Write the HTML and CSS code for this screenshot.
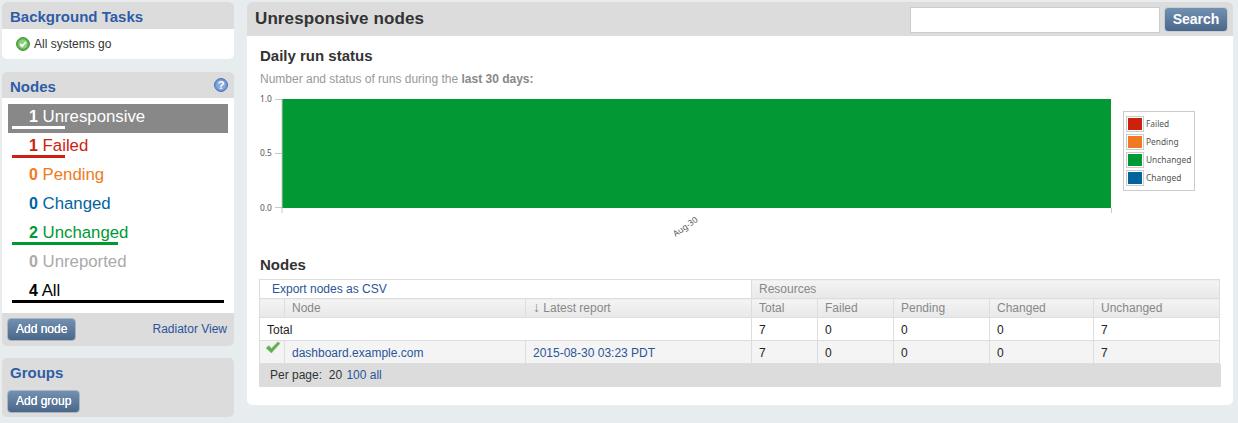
FILE: index.html
```html
<!DOCTYPE html>
<html lang="en">
<head>
    <meta charset="UTF-8">
    <title>Unresponsive nodes</title>
    <link rel="stylesheet" href="styles.css">
</head>

<body>

    <div class="page">

        <!-- Sidebar -->
        <aside class="sidebar">

            <section class="box tasks">
                <h3>Background Tasks</h3>
                <div class="tasks-body">
                    <svg class="ok-icon" width="14" height="14" viewBox="0 0 14 14">
                        <circle cx="7" cy="7" r="6.4" fill="#5cb24a" stroke="#3d8f34"/>
                        <circle cx="7" cy="7" r="4.6" fill="#8fd07e"/>
                        <path d="M4.2 7.2 L6.2 9.2 L9.9 5" fill="none" stroke="#fff" stroke-width="1.8"/>
                    </svg>
                    <span>All systems go</span>
                </div>
            </section>

            <section class="box nodes">
                <div class="nodes-head">
                    <h3>Nodes</h3>
                    <svg class="help-icon" width="14" height="14" viewBox="0 0 14 14">
                        <circle cx="7" cy="7" r="6.5" fill="#6d94cf" stroke="#4a74b4"/>
                        <circle cx="7" cy="7" r="4.8" fill="#88a9dc"/>
                        <text x="7" y="10.5" text-anchor="middle" class="help-mark">?</text>
                    </svg>
                </div>
                <ul class="status-list">
                    <li class="status selected"><div class="status-text"><b>1</b> Unresponsive</div><div class="status-bar" style="width: 25%"></div></li>
                    <li class="status failed"><div class="status-text"><b>1</b> Failed</div><div class="status-bar" style="width: 25%"></div></li>
                    <li class="status pending"><div class="status-text"><b>0</b> Pending</div><div class="status-bar" style="width: 0%"></div></li>
                    <li class="status changed"><div class="status-text"><b>0</b> Changed</div><div class="status-bar" style="width: 0%"></div></li>
                    <li class="status unchanged"><div class="status-text"><b>2</b> Unchanged</div><div class="status-bar" style="width: 50%"></div></li>
                    <li class="status unreported"><div class="status-text"><b>0</b> Unreported</div><div class="status-bar" style="width: 0%"></div></li>
                    <li class="status all"><div class="status-text"><b>4</b> All</div><div class="status-bar" style="width: 100%"></div></li>
                </ul>
                <div class="nodes-foot">
                    <a class="btn" href="#">Add node</a>
                    <a class="link" href="#">Radiator View</a>
                </div>
            </section>

            <section class="box groups">
                <h3>Groups</h3>
                <a class="btn" href="#">Add group</a>
            </section>

        </aside>

        <!-- Main panel -->
        <main class="main">

            <header class="main-head">
                <h1>Unresponsive nodes</h1>
                <form class="search">
                    <input type="text">
                    <button type="button" class="btn btn-big">Search</button>
                </form>
            </header>

            <div class="main-body">

                <h2>Daily run status</h2>
                <p class="note">Number and status of runs during the <strong>last 30 days:</strong></p>

                <!-- Chart -->
                <svg class="chart" width="961" height="146" viewBox="0 -5 961 146">
                    <rect x="23" y="0" width="829" height="109" fill="#019934"/>
                    <path d="M23 0V114 M852.5 109V114 M16 .5H23 M16 54.5H23 M16 108.5H23" stroke="#c8c8c8" fill="none"/>
                    <text x="1" y="3" class="axis">1.0</text>
                    <text x="1" y="57" class="axis">0.5</text>
                    <text x="1" y="112" class="axis">0.0</text>
                    <text x="428" y="130" class="axis" transform="rotate(-35 428 130)" text-anchor="middle">Aug-30</text>

                    <rect x="864.5" y="12.5" width="71" height="79" fill="#fff" stroke="#ccc"/>

                    <rect x="868.5" y="18.5" width="15" height="13" fill="#cd2110" stroke="#fff"/>
                    <rect x="867.5" y="17.5" width="17" height="15" fill="none" stroke="#ccc"/>
                    <text x="887" y="28" class="axis">Failed</text>

                    <rect x="868.5" y="36.5" width="15" height="13" fill="#f07a21" stroke="#fff"/>
                    <rect x="867.5" y="35.5" width="17" height="15" fill="none" stroke="#ccc"/>
                    <text x="887" y="46" class="axis">Pending</text>

                    <rect x="868.5" y="54.5" width="15" height="13" fill="#019934" stroke="#fff"/>
                    <rect x="867.5" y="53.5" width="17" height="15" fill="none" stroke="#ccc"/>
                    <text x="887" y="64" class="axis">Unchanged</text>

                    <rect x="868.5" y="72.5" width="15" height="13" fill="#00649e" stroke="#fff"/>
                    <rect x="867.5" y="71.5" width="17" height="15" fill="none" stroke="#ccc"/>
                    <text x="887" y="82" class="axis">Changed</text>
                </svg>

                <h2 class="nodes-title">Nodes</h2>

                <!-- Nodes table -->
                <table class="node-table">
                    <colgroup>
                        <col class="col-icon">
                        <col class="col-node">
                        <col class="col-report">
                        <col class="col-total">
                        <col class="col-failed">
                        <col class="col-pending">
                        <col class="col-changed">
                        <col>
                    </colgroup>
                    <thead>
                        <tr>
                            <td colspan="3" class="export"><a href="#">Export nodes as CSV</a></td>
                            <th colspan="5">Resources</th>
                        </tr>
                        <tr>
                            <th></th>
                            <th>Node</th>
                            <th><span class="arrow">↓</span> Latest report</th>
                            <th>Total</th>
                            <th>Failed</th>
                            <th>Pending</th>
                            <th>Changed</th>
                            <th>Unchanged</th>
                        </tr>
                    </thead>
                    <tbody>
                        <tr class="total-row">
                            <td colspan="3">Total</td>
                            <td>7</td><td>0</td><td>0</td><td>0</td><td>7</td>
                        </tr>
                        <tr class="node-row">
                            <td class="tick">
                                <svg width="16" height="13" viewBox="0 0 16 13">
                                    <path d="M1 7 L4 4.6 L6.4 7.4 L13 .8 L15 2.4 L6.4 12 Z" fill="#5fae52" stroke="#8cc47f" stroke-width=".6"/>
                                </svg>
                            </td>
                            <td><a href="#">dashboard.example.com</a></td>
                            <td><a href="#">2015-08-30 03:23 PDT</a></td>
                            <td>7</td><td>0</td><td>0</td><td>0</td><td>7</td>
                        </tr>
                    </tbody>
                </table>
                <div class="per-page">Per page: &nbsp;20 <a class="page-link" href="#">100</a> <a href="#">all</a></div>

            </div>
        </main>

    </div>

</body>
</html>
```

FILE: styles.css
```css
/* Reset */
* { margin: 0; padding: 0; box-sizing: border-box; }

/* Body */
body {
    font-family: "Liberation Sans", Arial, sans-serif;
    font-size: 12px;
    color: #333;
    background: #e7ecef;
    overflow: hidden;
}

a {
    color: #2a5599;
    text-decoration: none;
}

.page {
    display: flex;
    align-items: flex-start;
    gap: 13px;
    padding: 2px 5px 0 2px;
}

/* Sidebar */
.sidebar {
    width: 232px;
    flex-shrink: 0;
    display: flex;
    flex-direction: column;
    gap: 12px;
}

.box {
    background: #dcdcdc;
    border-radius: 5px;
    overflow: hidden;
}

.box h3 {
    font-size: 15px;
    line-height: 17px;
    color: #2f5ca6;
}

.tasks {
    background: #fff;
    height: 57px;
    margin-bottom: 1px;
}

.tasks h3 {
    height: 27px;
    padding: 6px 8px 0;
    background: #dcdcdc;
}

.tasks-body {
    display: flex;
    align-items: center;
    gap: 4px;
    padding: 8px 0 0 14px;
}

/* Nodes box */
.nodes-head {
    height: 26px;
    display: flex;
    justify-content: space-between;
    padding: 6px 6px 0 8px;
}

.help-mark {
    font-size: 11px;
    font-weight: bold;
    fill: #fff;
}

.status-list {
    list-style: none;
    background: #fff;
    padding: 6px 6px 0;
    height: 215px;
}

.status {
    height: 29px;
    padding: 3px 4px 0;
}

.status-text {
    font-size: 16.8px;
    line-height: 19px;
    padding-left: 17px;
}

.status-text b {
    font-size: 16px;
}

.status-bar {
    height: 3px;
    background: currentColor;
}

.selected { background: #888; color: #fff; }
.failed { color: #cd2110; }
.pending { color: #f07a21; }
.changed { color: #00649e; }
.unchanged { color: #019934; }
.unreported { color: #aaa; }
.all { color: #000; }

.nodes-foot {
    height: 33px;
    display: flex;
    justify-content: space-between;
    align-items: center;
    padding: 0 7px 1px 5px;
}

/* Buttons */
.btn {
    display: inline-block;
    font-family: inherit;
    font-size: 12px;
    line-height: 21px;
    padding: 0 8px;
    color: #fff;
    text-shadow: 0 0 .6px #fff;
    border: 1px solid #a9b4c0;
    border-radius: 4px;
    background: linear-gradient(#7290b2, #4a678a);
}

.btn-big {
    width: 64px;
    height: 25px;
    font-size: 14px;
    font-weight: bold;
    line-height: 22px;
    padding: 0;
    text-shadow: none;
    border-color: #c5ccd4;
}

/* Groups box */
.groups {
    height: 59px;
    padding: 6px 5px 0;
}

.groups h3 {
    padding-left: 3px;
    margin-bottom: 9px;
}

/* Main panel */
.main {
    flex: 1;
    height: 403px;
    background: #fff;
    border-radius: 5px;
    overflow: hidden;
}

.main-head {
    height: 34px;
    background: #dcdcdc;
    display: flex;
    justify-content: space-between;
    align-items: center;
    padding: 0 5px 0 8px;
}

h1 {
    font-size: 17px;
    letter-spacing: .1px;
    color: #333;
}

.search {
    display: flex;
    align-items: flex-start;
    gap: 4px;
    margin-top: 1px;
}

.search input {
    width: 250px;
    height: 26px;
    border: 1px solid #ccc;
    background: #fff;
}

.main-body {
    padding: 11px 12px 0;
}

h2 {
    font-size: 15px;
    line-height: 18px;
    padding-left: 1px;
    color: #333;
}

.note {
    color: #999;
    line-height: 14px;
    padding-left: 1px;
    margin-top: 7px;
    margin-bottom: 8px;
}

.note strong {
    color: #888;
}

/* Chart */
.chart {
    display: block;
}

.axis {
    font-family: "Noto Sans", sans-serif;
    font-size: 8.4px;
    fill: #555;
}

.nodes-title {
    margin-top: 16px;
    margin-bottom: 5px;
}

/* Nodes table */
.node-table {
    width: 961px;
    table-layout: fixed;
    border-collapse: collapse;
    border: 1px solid #ddd;
}

.col-icon { width: 25px; }
.col-node { width: 241px; }
.col-report { width: 226px; }
.col-total { width: 66px; }
.col-failed { width: 76px; }
.col-pending { width: 96px; }
.col-changed { width: 104px; }

.node-table th,
.node-table td {
    border: 1px solid #ddd;
    padding: 0 7px;
    text-align: left;
    white-space: nowrap;
}

.node-table th {
    height: 19px;
    font-weight: normal;
    color: #888;
    background: linear-gradient(#f4f4f4, #e8e8e8);
}

.node-table .export {
    height: 19px;
    padding-left: 12px;
}

.arrow {
    font-size: 14px;
    line-height: 12px;
}

.total-row td {
    height: 23px;
    padding-top: 1px;
    color: #222;
}

.node-row td {
    height: 23px;
    padding-top: 1px;
    color: #222;
    background: #f4f4f4;
}

.node-table .tick {
    padding: 0 0 0 5px;
    vertical-align: top;
    line-height: 0;
}

.per-page {
    height: 23px;
    line-height: 22px;
    padding-left: 11px;
    background: #dcdcdc;
    color: #333;
}

.page-link {
    margin-left: 1px;
}
```
